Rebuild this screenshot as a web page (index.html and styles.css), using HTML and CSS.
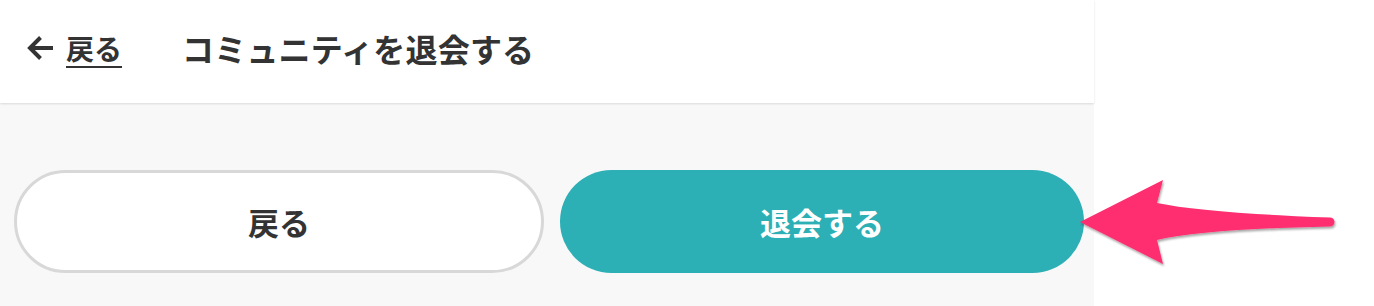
FILE: index.html
```html
<!DOCTYPE html>
<html lang="ja">
<head>
<meta charset="utf-8">
<title>コミュニティを退会する</title>
<link rel="stylesheet" href="styles.css">
</head>
<body>
<div class="app">
  <header class="header">
    <a class="back" href="#">
      <svg class="back-icon" width="27" height="26" viewBox="0 0 27 26" aria-hidden="true">
        <path d="M26 13H4M13.5 2.5L3 13L13.5 23.5" fill="none" stroke="#333" stroke-width="4" stroke-linecap="butt" stroke-linejoin="miter"/>
      </svg>
      <span class="back-label">戻る</span>
    </a>
    <h1 class="title">コミュニティを退会する</h1>
  </header>
  <main class="main">
    <div class="actions">
      <button class="btn btn-outline" type="button">戻る</button>
      <button class="btn btn-primary" type="button">退会する</button>
    </div>
  </main>
</div>
<svg class="annotation" width="1374" height="306" viewBox="0 0 1374 306" aria-hidden="true">
  <defs>
    <filter id="sh" x="-10%" y="-30%" width="120%" height="160%">
      <feDropShadow dx="1" dy="2" stdDeviation="1.2" flood-color="#000" flood-opacity="0.35"/>
    </filter>
  </defs>
  <path d="M1080 222 L1163 180 L1157 203 Q1205 213 1330 217.5 A4.5 4.5 0 0 1 1330 226.5 Q1205 229 1157 240 L1163 264 Z" fill="#ff2d6f" filter="url(#sh)"/>
</svg>
</body>
</html>
```
FILE: styles.css
```css
* { box-sizing: border-box; }
html, body { margin: 0; padding: 0; background: #fff; }
body {
  font-family: "Noto Sans CJK JP", "Noto Sans", sans-serif;
  color: #333;
  width: 1374px;
  height: 306px;
  overflow: hidden;
  position: relative;
}
.app { width: 1094px; }
.header {
  height: 103px;
  background: #fff;
  display: flex;
  align-items: center;
  padding: 0 0 8px 27px;
  box-shadow: 0 1px 2px rgba(0, 0, 0, 0.12);
  position: relative;
  z-index: 1;
}
.back {
  display: flex;
  align-items: center;
  gap: 12px;
  color: #333;
  text-decoration: none;
}
.back-icon { display: block; }
.back-label {
  font-size: 28px;
  font-weight: 700;
  text-decoration: underline;
  text-decoration-thickness: 2px;
  text-underline-offset: 6px;
  line-height: 1;
}
.title {
  margin: 0 0 0 60px;
  font-size: 32px;
  font-weight: 700;
  line-height: 1;
  letter-spacing: 0.2px;
}
.main {
  background: #f8f8f8;
  height: 203px;
  padding: 67px 10px 0 14px;
}
.actions {
  display: flex;
  gap: 16px;
}
.btn {
  flex: 1 1 0;
  height: 103px;
  border-radius: 52px;
  font-family: inherit;
  font-size: 31px;
  font-weight: 700;
  display: flex;
  align-items: center;
  justify-content: center;
  cursor: pointer;
  padding: 0;
}
.btn-outline {
  background: #fff;
  border: 3px solid #d8d8d8;
  color: #333;
}
.btn-primary {
  background: #2cafb5;
  border: none;
  color: #fff;
}
.annotation {
  position: absolute;
  left: 0;
  top: 0;
  pointer-events: none;
}
```
